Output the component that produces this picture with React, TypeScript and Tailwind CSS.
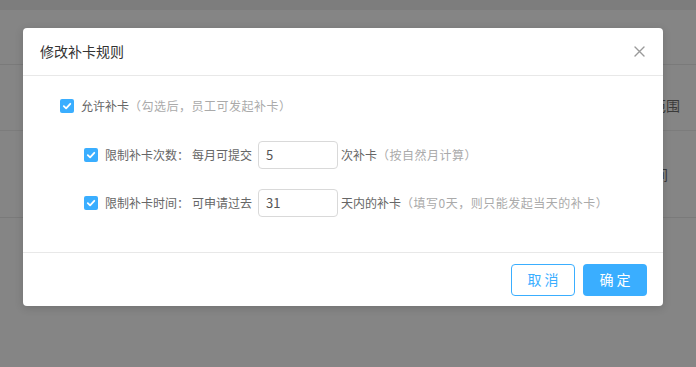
import React from "react";

const font = { fontFamily: '"Noto Sans CJK SC", "Noto Sans", sans-serif' };

const Check = () => (
  <span className="flex h-[14px] w-[14px] shrink-0 items-center justify-center rounded-[2px] bg-[#3aaeff]">
    <svg width="10" height="10" viewBox="0 0 10 10" fill="none">
      <path d="M1.8 5.2 L4.1 7.4 L8.3 2.8" stroke="white" strokeWidth="1.8" strokeLinecap="round" strokeLinejoin="round" />
    </svg>
  </span>
);

const NumberInput = ({ value }: { value: string }) => (
  <div className="flex h-[28px] w-[80px] items-center rounded-[4px] border border-[#d9d9d9] bg-white px-[7px] text-[13px] text-[#555]">
    {value}
  </div>
);

export default function App() {
  return (
    <div className="relative h-[367px] w-[696px] overflow-hidden bg-[#858585] text-[12px]" style={font}>
      {/* page behind the mask */}
      <div className="h-[10px] bg-[#7d7d7d]" />
      <div className="h-[55px] border-b border-[#7a7a7a]" />
      <div className="flex h-[66px] items-center justify-end border-b border-[#7c7c7c] pr-[16px] pt-[16px] text-[14px] text-[#3a3a3a]">
        适用范围
      </div>
      <div className="flex h-[87px] items-center justify-end border-b border-[#7a7a7a] pr-[28px] text-[14px] text-[#3a3a3a]">
        打卡时间
      </div>

      {/* modal */}
      <div className="absolute left-[23px] top-[28px] w-[640px] rounded-[4px] bg-white shadow-[0_2px_8px_rgba(0,0,0,0.15)]">
        <div className="flex h-[48px] items-center justify-between border-b border-[#e8e8e8] pl-[17px] pr-[18px]">
          <span className="text-[14px] text-[#333]">修改补卡规则</span>
          <svg width="11" height="11" viewBox="0 0 11 11">
            <path d="M1 1 L10 10 M10 1 L1 10" stroke="#9a9a9a" strokeWidth="1.4" strokeLinecap="round" />
          </svg>
        </div>

        <div className="flex h-[176px] flex-col pl-[37px] pt-[20px]">
          <div className="flex h-[20px] items-center">
            <Check />
            <span className="ml-[7px] text-[#666]">允许补卡</span>
            <span className="tracking-[0.5px] text-[#aaa]">（勾选后，员工可发起补卡）</span>
          </div>

          <div className="mt-[25px] flex items-center pl-[24px]">
            <Check />
            <span className="ml-[7px] text-[#666]">限制补卡次数：</span>
            <span className="ml-[3px] mr-[6px] text-[#666]">每月可提交</span>
            <NumberInput value="5" />
            <span className="ml-[3px] text-[#666]">次补卡</span>
            <span className="tracking-[0.5px] text-[#aaa]">（按自然月计算）</span>
          </div>

          <div className="mt-[20px] flex items-center pl-[24px]">
            <Check />
            <span className="ml-[7px] text-[#666]">限制补卡时间：</span>
            <span className="ml-[3px] mr-[6px] text-[#666]">可申请过去</span>
            <NumberInput value="31" />
            <span className="ml-[3px] text-[#666]">天内的补卡</span>
            <span className="tracking-[0.5px] text-[#aaa]">（填写0天，则只能发起当天的补卡）</span>
          </div>
        </div>

        <div className="flex h-[54px] items-center justify-end gap-[8px] border-t border-[#e8e8e8] pr-[16px]">
          <button className="h-[32px] w-[64px] rounded-[4px] border border-[#3aaeff] bg-white text-[14px] text-[#3aaeff]">
            取 消
          </button>
          <button className="h-[32px] w-[64px] rounded-[4px] bg-[#3aaeff] text-[14px] text-white">
            确 定
          </button>
        </div>
      </div>
    </div>
  );
}
